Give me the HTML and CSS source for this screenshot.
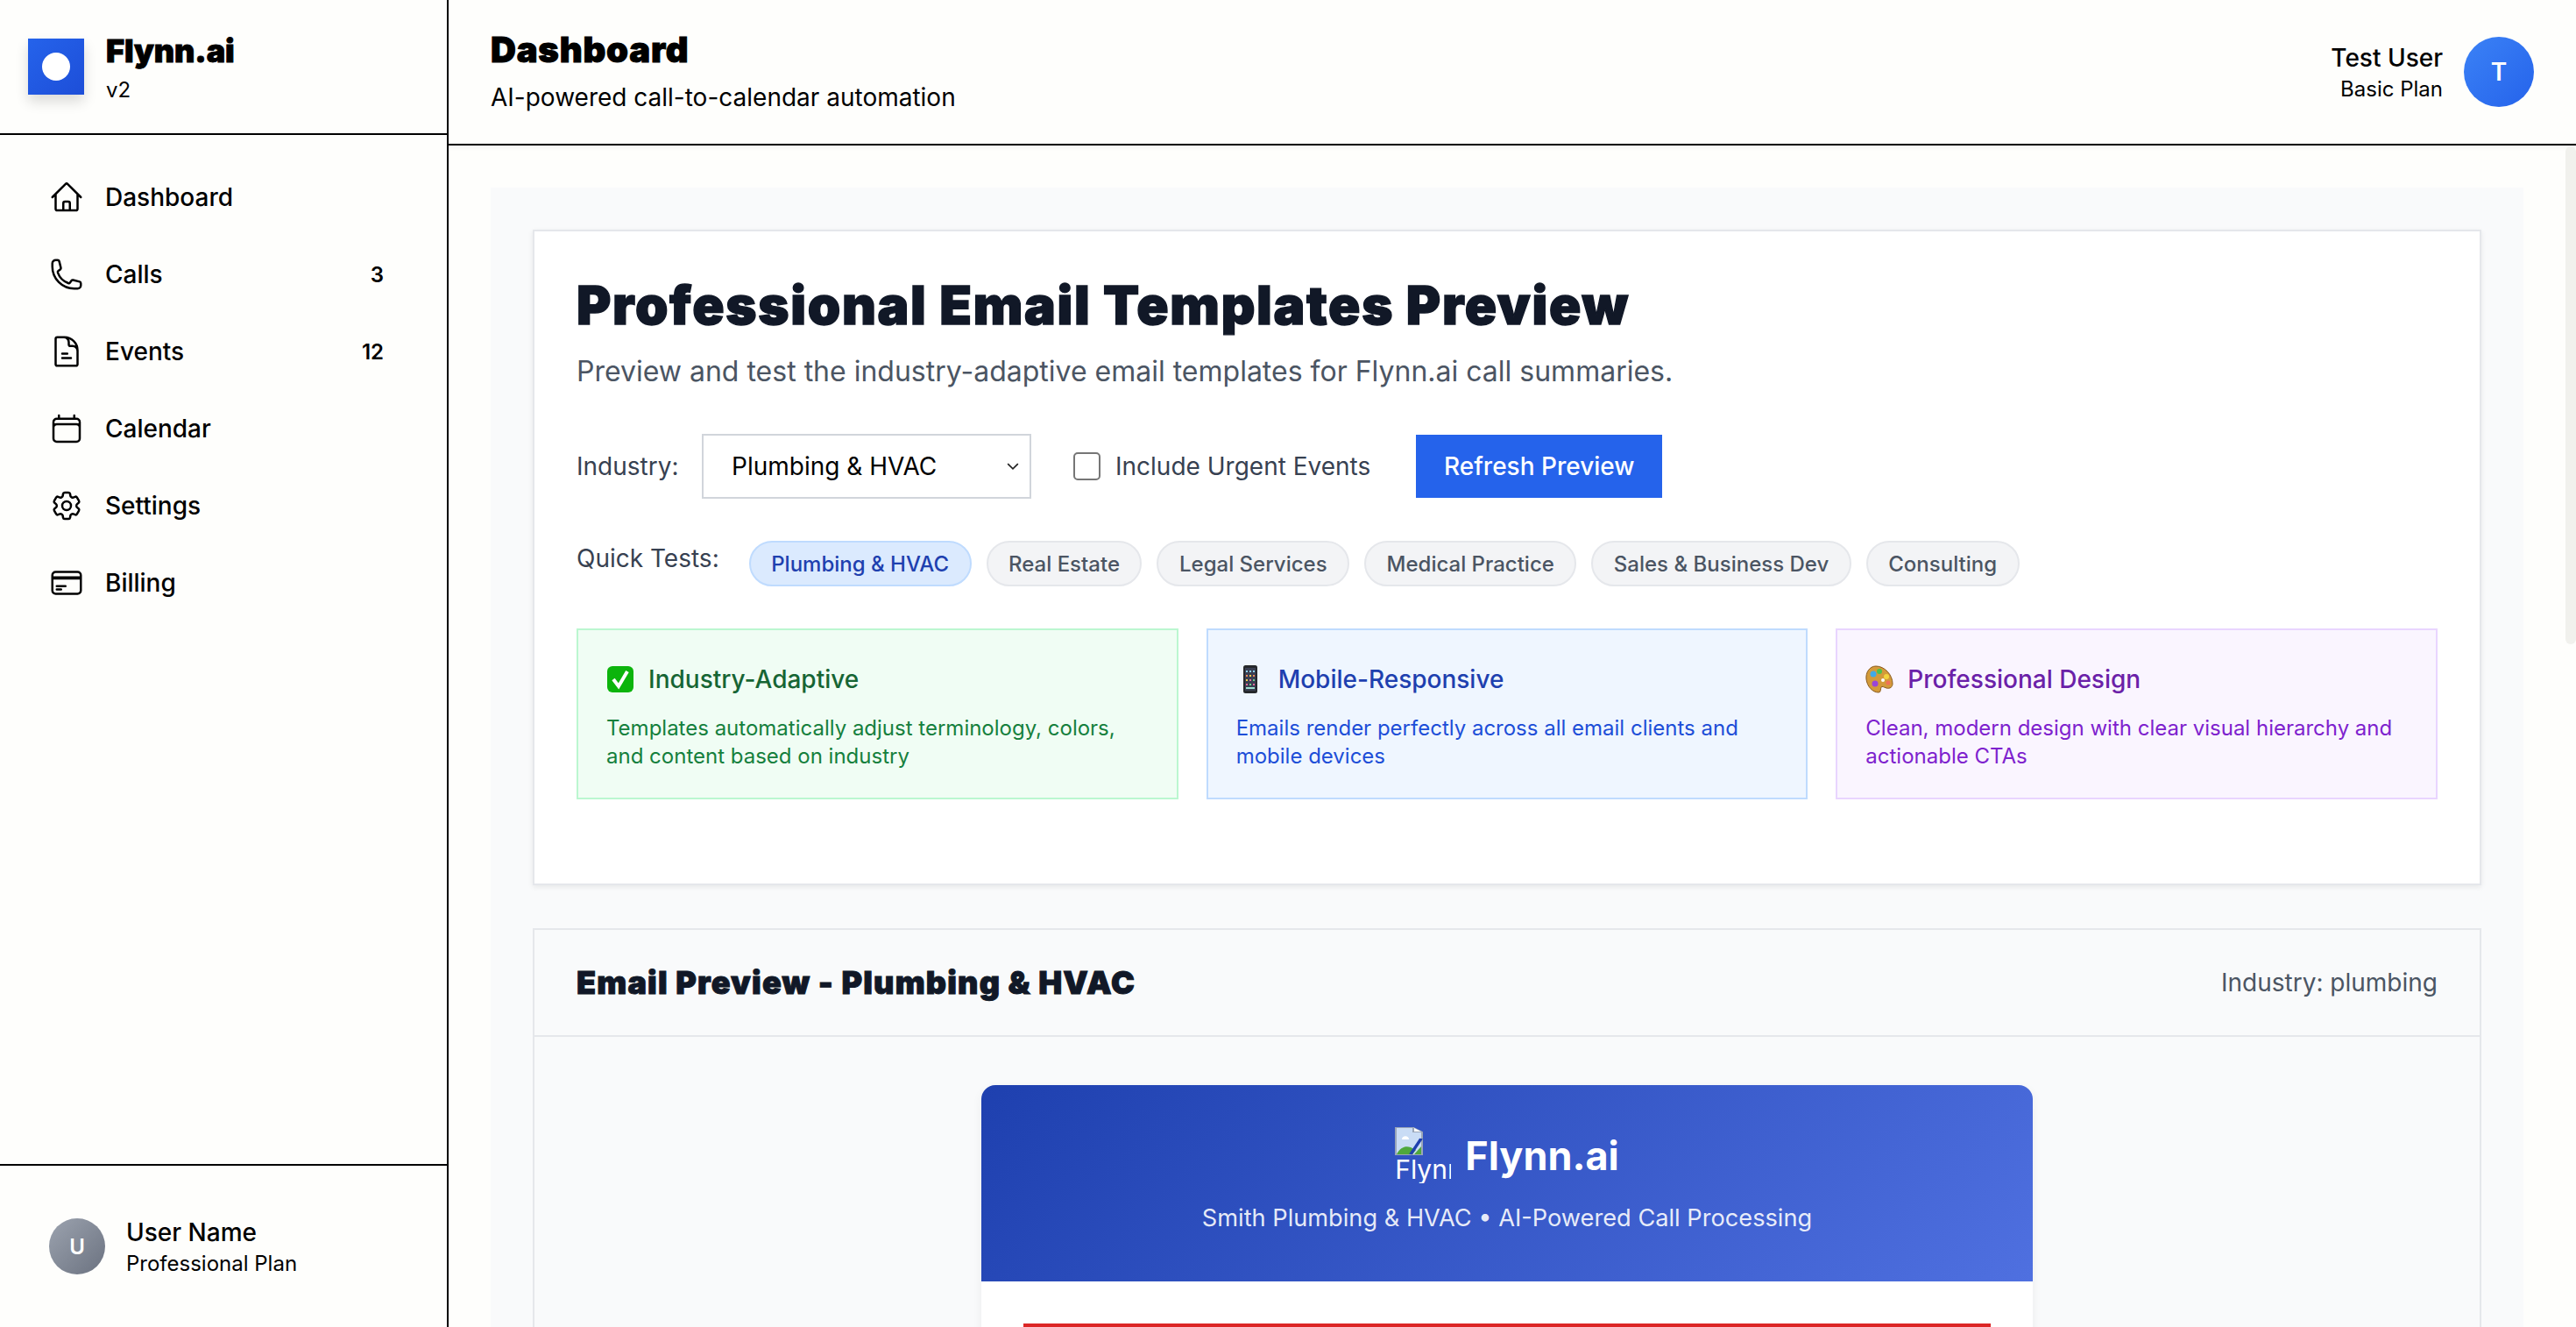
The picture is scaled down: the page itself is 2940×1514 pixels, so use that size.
FILE: index.html
```html
<!DOCTYPE html>
<html lang="en">
<head>
<meta charset="utf-8">
<title>Flynn.ai</title>
<link rel="stylesheet" href="styles.css">
</head>
<body>
<div class="app">
  <aside class="sidebar">
    <div class="brand">
      <div class="brand-logo"><span class="brand-dot"></span></div>
      <div class="brand-text">
        <div class="brand-name">Flynn.ai</div>
        <div class="brand-version">v2</div>
      </div>
    </div>
    <nav class="nav">
      <a class="nav-item"><svg class="nav-icon" viewBox="0 0 24 24"><path d="M2.25 12l8.954-8.955c.44-.439 1.152-.439 1.591 0L21.75 12M4.5 9.75v10.125c0 .621.504 1.125 1.125 1.125H9.75v-4.875c0-.621.504-1.125 1.125-1.125h2.25c.621 0 1.125.504 1.125 1.125V21h4.125c.621 0 1.125-.504 1.125-1.125V9.75M8.25 21h8.25"/></svg><span class="nav-label">Dashboard</span></a>
      <a class="nav-item"><svg class="nav-icon" viewBox="0 0 24 24"><path d="M2.25 6.75c0 8.284 6.716 15 15 15h2.25a2.25 2.25 0 0 0 2.25-2.25v-1.372c0-.516-.351-.966-.852-1.091l-4.423-1.106c-.44-.11-.902.055-1.173.417l-.97 1.293c-.282.376-.769.542-1.21.38a12.035 12.035 0 0 1-7.143-7.143c-.162-.441.004-.928.38-1.21l1.293-.97c.363-.271.527-.734.417-1.173L6.963 3.102a1.125 1.125 0 0 0-1.091-.852H4.5A2.25 2.25 0 0 0 2.25 4.5v2.25Z"/></svg><span class="nav-label">Calls</span><span class="nav-badge">3</span></a>
      <a class="nav-item"><svg class="nav-icon" viewBox="0 0 24 24"><path d="M19.5 14.25v-2.625a3.375 3.375 0 0 0-3.375-3.375h-1.5A1.125 1.125 0 0 1 13.5 7.125v-1.5a3.375 3.375 0 0 0-3.375-3.375H8.25m.75 11.25h3.5M9 16.5h6M10.5 2.25H5.625c-.621 0-1.125.504-1.125 1.125v17.25c0 .621.504 1.125 1.125 1.125h12.75c.621 0 1.125-.504 1.125-1.125V11.25a9 9 0 0 0-9-9Z"/></svg><span class="nav-label">Events</span><span class="nav-badge">12</span></a>
      <a class="nav-item"><svg class="nav-icon" viewBox="0 0 24 24"><path d="M6.75 3v2.25M17.25 3v2.25M3 18.75V7.5a2.25 2.25 0 0 1 2.25-2.25h13.5A2.25 2.25 0 0 1 21 7.5v11.25m-18 0A2.25 2.25 0 0 0 5.25 21h13.5A2.25 2.25 0 0 0 21 18.75m-18 0v-7.5A2.25 2.25 0 0 1 5.25 9h13.5A2.25 2.25 0 0 1 21 11.25v7.5"/></svg><span class="nav-label">Calendar</span></a>
      <a class="nav-item"><svg class="nav-icon" viewBox="0 0 24 24"><path d="M9.594 3.94c.09-.542.56-.94 1.11-.94h2.593c.55 0 1.02.398 1.11.94l.213 1.281c.063.374.313.686.645.87.074.04.147.083.22.127.325.196.72.257 1.075.124l1.217-.456a1.125 1.125 0 0 1 1.37.49l1.296 2.247a1.125 1.125 0 0 1-.26 1.431l-1.003.827c-.293.241-.438.613-.43.992a7.723 7.723 0 0 1 0 .255c-.008.378.137.75.43.991l1.004.827c.424.35.534.955.26 1.43l-1.298 2.247a1.125 1.125 0 0 1-1.369.491l-1.217-.456c-.355-.133-.75-.072-1.076.124a6.47 6.47 0 0 1-.22.128c-.331.183-.581.495-.644.869l-.213 1.281c-.09.543-.56.94-1.11.94h-2.594c-.55 0-1.019-.398-1.11-.94l-.213-1.281c-.062-.374-.312-.686-.644-.87a6.52 6.52 0 0 1-.22-.127c-.325-.196-.72-.257-1.076-.124l-1.217.456a1.125 1.125 0 0 1-1.369-.49l-1.297-2.247a1.125 1.125 0 0 1 .26-1.431l1.004-.827c.292-.24.437-.613.43-.991a6.932 6.932 0 0 1 0-.255c.007-.38-.138-.751-.43-.992l-1.004-.827a1.125 1.125 0 0 1-.26-1.43l1.297-2.247a1.125 1.125 0 0 1 1.37-.491l1.216.456c.356.133.751.072 1.076-.124.072-.044.146-.086.22-.128.332-.183.582-.495.644-.869l.214-1.28Z"/><path d="M15 12a3 3 0 1 1-6 0 3 3 0 0 1 6 0Z"/></svg><span class="nav-label">Settings</span></a>
      <a class="nav-item"><svg class="nav-icon" viewBox="0 0 24 24"><path d="M2.25 8.25h19.5M2.25 9h19.5m-16.5 5.25h6m-6 2.25h3m-3.75 3h15a2.25 2.25 0 0 0 2.25-2.25V6.75A2.25 2.25 0 0 0 19.5 4.5h-15a2.25 2.25 0 0 0-2.25 2.25v10.5A2.25 2.25 0 0 0 4.5 19.5Z"/></svg><span class="nav-label">Billing</span></a>
    </nav>
    <div class="side-user">
      <div class="side-avatar">U</div>
      <div>
        <div class="side-name">User Name</div>
        <div class="side-plan">Professional Plan</div>
      </div>
    </div>
  </aside>

  <main class="main">
    <header class="topbar">
      <div>
        <h1 class="top-title">Dashboard</h1>
        <p class="top-sub">AI-powered call-to-calendar automation</p>
      </div>
      <div class="top-user">
        <div class="top-user-text">
          <div class="top-user-name">Test User</div>
          <div class="top-user-plan">Basic Plan</div>
        </div>
        <div class="top-avatar">T</div>
      </div>
    </header>
    <div class="scroll-thumb"></div>
    <div class="content">
      <div class="panel">
        <section class="card">
          <h2 class="card-title">Professional Email Templates Preview</h2>
          <p class="card-sub">Preview and test the industry-adaptive email templates for Flynn.ai call summaries.</p>
          <div class="controls">
            <label class="control-label">Industry:</label>
            <div class="select"><span>Plumbing &amp; HVAC</span>
              <svg class="chevron" viewBox="0 0 12 8"><path d="M1 1.5l5 5 5-5"/></svg>
            </div>
            <span class="checkbox"></span>
            <span class="check-label">Include Urgent Events</span>
            <button class="refresh">Refresh Preview</button>
          </div>
          <div class="quick">
            <span class="quick-label">Quick Tests:</span>
            <span class="pill pill-active">Plumbing &amp; HVAC</span>
            <span class="pill">Real Estate</span>
            <span class="pill">Legal Services</span>
            <span class="pill">Medical Practice</span>
            <span class="pill">Sales &amp; Business Dev</span>
            <span class="pill">Consulting</span>
          </div>
          <div class="features">
            <div class="feature feature-green">
              <h3 class="feature-title">
                <svg class="emoji" viewBox="0 0 32 32"><rect x="1" y="1" width="30" height="30" rx="6" fill="#0cb40c"/><path d="M8 16l6 8 10-17" fill="none" stroke="#fff" stroke-width="4"/></svg>
                Industry-Adaptive</h3>
              <p class="feature-text">Templates automatically adjust terminology, colors, and content based on industry</p>
            </div>
            <div class="feature feature-blue">
              <h3 class="feature-title">
                <svg class="emoji" viewBox="0 0 32 32"><rect x="8" y="0" width="16" height="32" rx="2.5" fill="#26282c"/><rect x="10" y="3" width="12" height="26" fill="#3a3f52"/><path d="M11 6h2v2h-2zM15 6h2v2h-2zM19 6h2v2h-2z" fill="#8fd3f0"/><path d="M11 11h2v2h-2zM19 11h2v2h-2z" fill="#f08a5d"/><path d="M15 11h2v2h-2zM11 16h2v2h-2z" fill="#f5d24a"/><path d="M19 16h2v2h-2zM15 21h2v2h-2z" fill="#6fd08c"/><path d="M15 16h2v2h-2zM11 21h2v2h-2zM19 21h2v2h-2z" fill="#e86a9a"/><path d="M11 25h10v2H11z" fill="#9fe0d0"/></svg>
                Mobile-Responsive</h3>
              <p class="feature-text">Emails render perfectly across all email clients and mobile devices</p>
            </div>
            <div class="feature feature-purple">
              <h3 class="feature-title">
                <svg class="emoji" viewBox="0 0 32 32"><path d="M12 1C5 1 0 8 1 16c1 8 7 15 14 15 3 0 2-4 3-6 1-1.500 3 0 6 1 4 1 7-1 7-5C31 11 22 1 12 1z" fill="#d39a3a" stroke="#8a5a1e" stroke-width="1"/><circle cx="9" cy="10" r="3.500" fill="#3fa9e8"/><circle cx="16" cy="7" r="3" fill="#4cc24c"/><circle cx="24" cy="13" r="3" fill="#f2d43d"/><circle cx="11" cy="21" r="3.500" fill="#9a45d8"/><circle cx="26" cy="20" r="2.500" fill="#f0705a"/><circle cx="20" cy="17" r="2" fill="#fff"/></svg>
                Professional Design</h3>
              <p class="feature-text">Clean, modern design with clear visual hierarchy and actionable CTAs</p>
            </div>
          </div>
        </section>

        <section class="preview">
          <div class="preview-head">
            <h2 class="preview-title">Email Preview - Plumbing &amp; HVAC</h2>
            <span class="preview-meta">Industry: plumbing</span>
          </div>
          <div class="preview-body">
            <div class="email">
              <div class="email-head">
                <div class="email-brand">
                  <div class="broken-img">
                    <svg class="broken-icon" viewBox="0 0 16 32" preserveAspectRatio="none"><path d="M.5.500h10l5 5v26H.5z" fill="#c9dcf5" stroke="#9aa6b8"/><path d="M10.500.500v5h5" fill="#fff" stroke="#9aa6b8"/><path d="M1 31c2-8 5-10 8-8l3 3-2 5z" fill="#4fa83d"/><path d="M4 14c0-5 4-5 4 0z" fill="#fff"/><path d="M15 13L9 31" stroke="#1e40af" stroke-width="2"/><path d="M11 31l4-9v9z" fill="#4fa83d"/></svg>
                    <span class="broken-alt">Flynn.ai</span>
                  </div>
                  <span class="email-name">Flynn.ai</span>
                </div>
                <div class="email-tag">Smith Plumbing &amp; HVAC • AI-Powered Call Processing</div>
              </div>
              <div class="email-body"><div class="urgent-line"></div></div>
            </div>
          </div>
        </section>
      </div>
    </div>
  </main>
</div>
</body>
</html>
```

FILE: styles.css
```css
* { box-sizing: border-box; }
html, body { margin: 0; height: 100%; overflow: hidden; }
body { font-family: Inter, "Noto Sans", sans-serif; background: #fefefc; color: #000; }
h1, h2, h3, p { margin: 0; }

.app { display: flex; height: 1514px; }

.sidebar { width: 512px; flex: none; display: flex; flex-direction: column; border-right: 2px solid #000; background: #fefefc; }
.brand { height: 154px; flex: none; display: flex; align-items: center; gap: 25px; padding: 0 32px; border-bottom: 2px solid #000; }
.brand-logo { width: 64px; height: 64px; background: linear-gradient(135deg, #2563eb, #1d4ed8); display: flex; align-items: center; justify-content: center; box-shadow: 0 8px 14px rgba(0,0,0,.14); }
.brand-dot { width: 32px; height: 32px; border-radius: 50%; background: #fff; }
.brand-text { padding-top: 6px; }
.brand-name { font-weight: 900; font-size: 36px; line-height: 44px; letter-spacing: -.1px; -webkit-text-stroke: .9px #000; }
.brand-version { font-size: 24px; line-height: 38px; margin-top: 4px; }

.nav { flex: 1; padding: 27px 32px; }
.nav-item { height: 88px; display: flex; align-items: center; padding: 0 40px 0 24px; }
.nav-icon { width: 40px; height: 40px; flex: none; fill: none; stroke: #000; stroke-width: 1.5; stroke-linecap: round; stroke-linejoin: round; margin-right: 24px; }
.nav-label { font-size: 28px; font-weight: 500; flex: 1; }
.nav-badge { font-size: 24px; font-weight: 600; }

.side-user { height: 186px; flex: none; border-top: 2px solid #000; display: flex; align-items: center; gap: 24px; padding: 0 56px; }
.side-avatar { width: 64px; height: 64px; border-radius: 50%; background: linear-gradient(135deg, #9ca3af, #6b7280); color: #fff; display: flex; align-items: center; justify-content: center; font-size: 24px; font-weight: 600; }
.side-name { font-size: 28px; font-weight: 500; line-height: 40px; }
.side-plan { font-size: 24px; line-height: 32px; }

.main { flex: 1; min-width: 0; position: relative; display: flex; flex-direction: column; overflow: hidden; }
.topbar { height: 166px; flex: none; display: flex; align-items: center; justify-content: space-between; padding: 0 48px; border-bottom: 2px solid #000; box-shadow: 0 2px 6px rgba(0,0,0,.05); }
.top-title { font-size: 40px; font-weight: 900; line-height: 48px; letter-spacing: .8px; -webkit-text-stroke: 1px #000; }
.top-sub { font-size: 28px; line-height: 40px; margin-top: 10px; }
.top-user { display: flex; align-items: center; gap: 24px; }
.top-user-text { text-align: right; }
.top-user-name { font-size: 28px; font-weight: 500; line-height: 40px; }
.top-user-plan { font-size: 24px; line-height: 32px; }
.top-avatar { width: 80px; height: 80px; border-radius: 50%; background: linear-gradient(135deg, #3b82f6, #2563eb); color: #fff; display: flex; align-items: center; justify-content: center; font-size: 28px; font-weight: 600; }
.scroll-thumb { position: absolute; right: 0; top: 167px; width: 12px; height: 568px; background: #f1f1ed; border-radius: 6px; }

.content { flex: 1; padding: 48px 60px 0 48px; min-height: 0; overflow: hidden; }
.panel { background: #f9fafb; padding: 48px 48px 200px; }

.card { background: #fff; border: 2px solid #e5e7eb; padding: 48px; box-shadow: 0 2px 6px rgba(0,0,0,.08); }
.card-title { font-size: 60px; font-weight: 900; line-height: 72px; color: #111827; letter-spacing: 1.7px; -webkit-text-stroke: 1.4px #111827; }
.card-sub { font-size: 32px; line-height: 48px; color: #4b5563; margin-top: 16px; }
.controls { display: flex; align-items: center; margin-top: 47px; height: 74px; }
.control-label { font-size: 28px; color: #374151; width: 143px; flex: none; margin-right: 0; }
.select { width: 376px; height: 74px; border: 2px solid #d1d5db; background: #fff; display: flex; align-items: center; justify-content: space-between; padding: 0 12px 0 32px; font-size: 28px; }
.chevron { width: 14px; height: 10px; fill: none; stroke: #222; stroke-width: 1.400; }
.checkbox { width: 31px; height: 32px; margin-left: 48px; border: 2px solid #767676; border-radius: 5px; background: #fff; }
.check-label { font-size: 28px; color: #374151; margin-left: 17px; }
.refresh { margin-left: 52px; width: 281px; height: 72px; border: 0; background: #2563eb; color: #fff; font-family: inherit; font-size: 28px; font-weight: 500; }

.quick { display: flex; align-items: center; gap: 17px; margin-top: 48px; }
.quick-label { font-size: 28px; color: #374151; margin-right: 17px; position: relative; top: -6px; }
.pill { height: 52px; padding: 0 23.5px; display: flex; align-items: center; border-radius: 26px; border: 2px solid #e5e7eb; background: #f3f4f6; color: #4b5563; font-size: 24px; font-weight: 500; white-space: nowrap; }
.pill-active { background: #dbeafe; border-color: #bfdbfe; color: #1e40af; }

.features { display: grid; grid-template-columns: repeat(3, 1fr); gap: 32px; margin-top: 48px; margin-bottom: 48px; }
.feature { height: 195px; border: 2px solid; padding: 36px 32px; }
.feature-title { display: flex; align-items: center; gap: 16px; font-size: 28px; font-weight: 500; line-height: 40px; }
.emoji { width: 32px; height: 32px; flex: none; }
.feature-text { font-size: 24px; line-height: 32px; margin-top: 20px; }
.feature-green { background: #f0fdf4; border-color: #bbf7d0; }
.feature-green .feature-title { color: #166534; }
.feature-green .feature-text { color: #15803d; }
.feature-blue { background: #eff6ff; border-color: #bfdbfe; }
.feature-blue .feature-title { color: #1e40af; }
.feature-blue .feature-text { color: #1d4ed8; }
.feature-purple { background: #faf5ff; border-color: #e9d5ff; }
.feature-purple .feature-title { color: #6b21a8; }
.feature-purple .feature-text { color: #7e22ce; }

.preview { margin-top: 49px; border: 2px solid #e5e7eb; background: #f9fafb; }
.preview-head { height: 122px; display: flex; align-items: center; justify-content: space-between; padding: 0 48px; border-bottom: 2px solid #e5e7eb; }
.preview-title { font-size: 36px; font-weight: 900; color: #111827; letter-spacing: 1.2px; -webkit-text-stroke: 1px #111827; }
.preview-meta { font-size: 28px; color: #4b5563; }
.preview-body { padding: 55px 0 0; }
.email { width: 1200px; margin: 0 auto; background: #fff; border-radius: 16px 16px 0 0; box-shadow: 0 4px 12px rgba(0,0,0,.06); }
.email-head { height: 224px; border-radius: 16px 16px 0 0; background: linear-gradient(135deg, #1e40af, #4f70e0); color: #fff; display: flex; flex-direction: column; align-items: center; padding-top: 48px; }
.email-brand { display: flex; align-items: center; gap: 16px; height: 64px; }
.broken-img { width: 64px; height: 64px; overflow: hidden; display: flex; flex-direction: column; }
.broken-icon { width: 32px; height: 32px; flex: none; }
.broken-alt { font-size: 30px; line-height: 32px; white-space: nowrap; }
.email-name { font-size: 45px; font-weight: 700; }
.email-tag { font-size: 27.2px; color: rgba(255,255,255,.9); margin-top: 23px; }
.email-body { padding: 48px 48px 0; height: 600px; }
.urgent-line { height: 4px; background: #dc2626; }
```
